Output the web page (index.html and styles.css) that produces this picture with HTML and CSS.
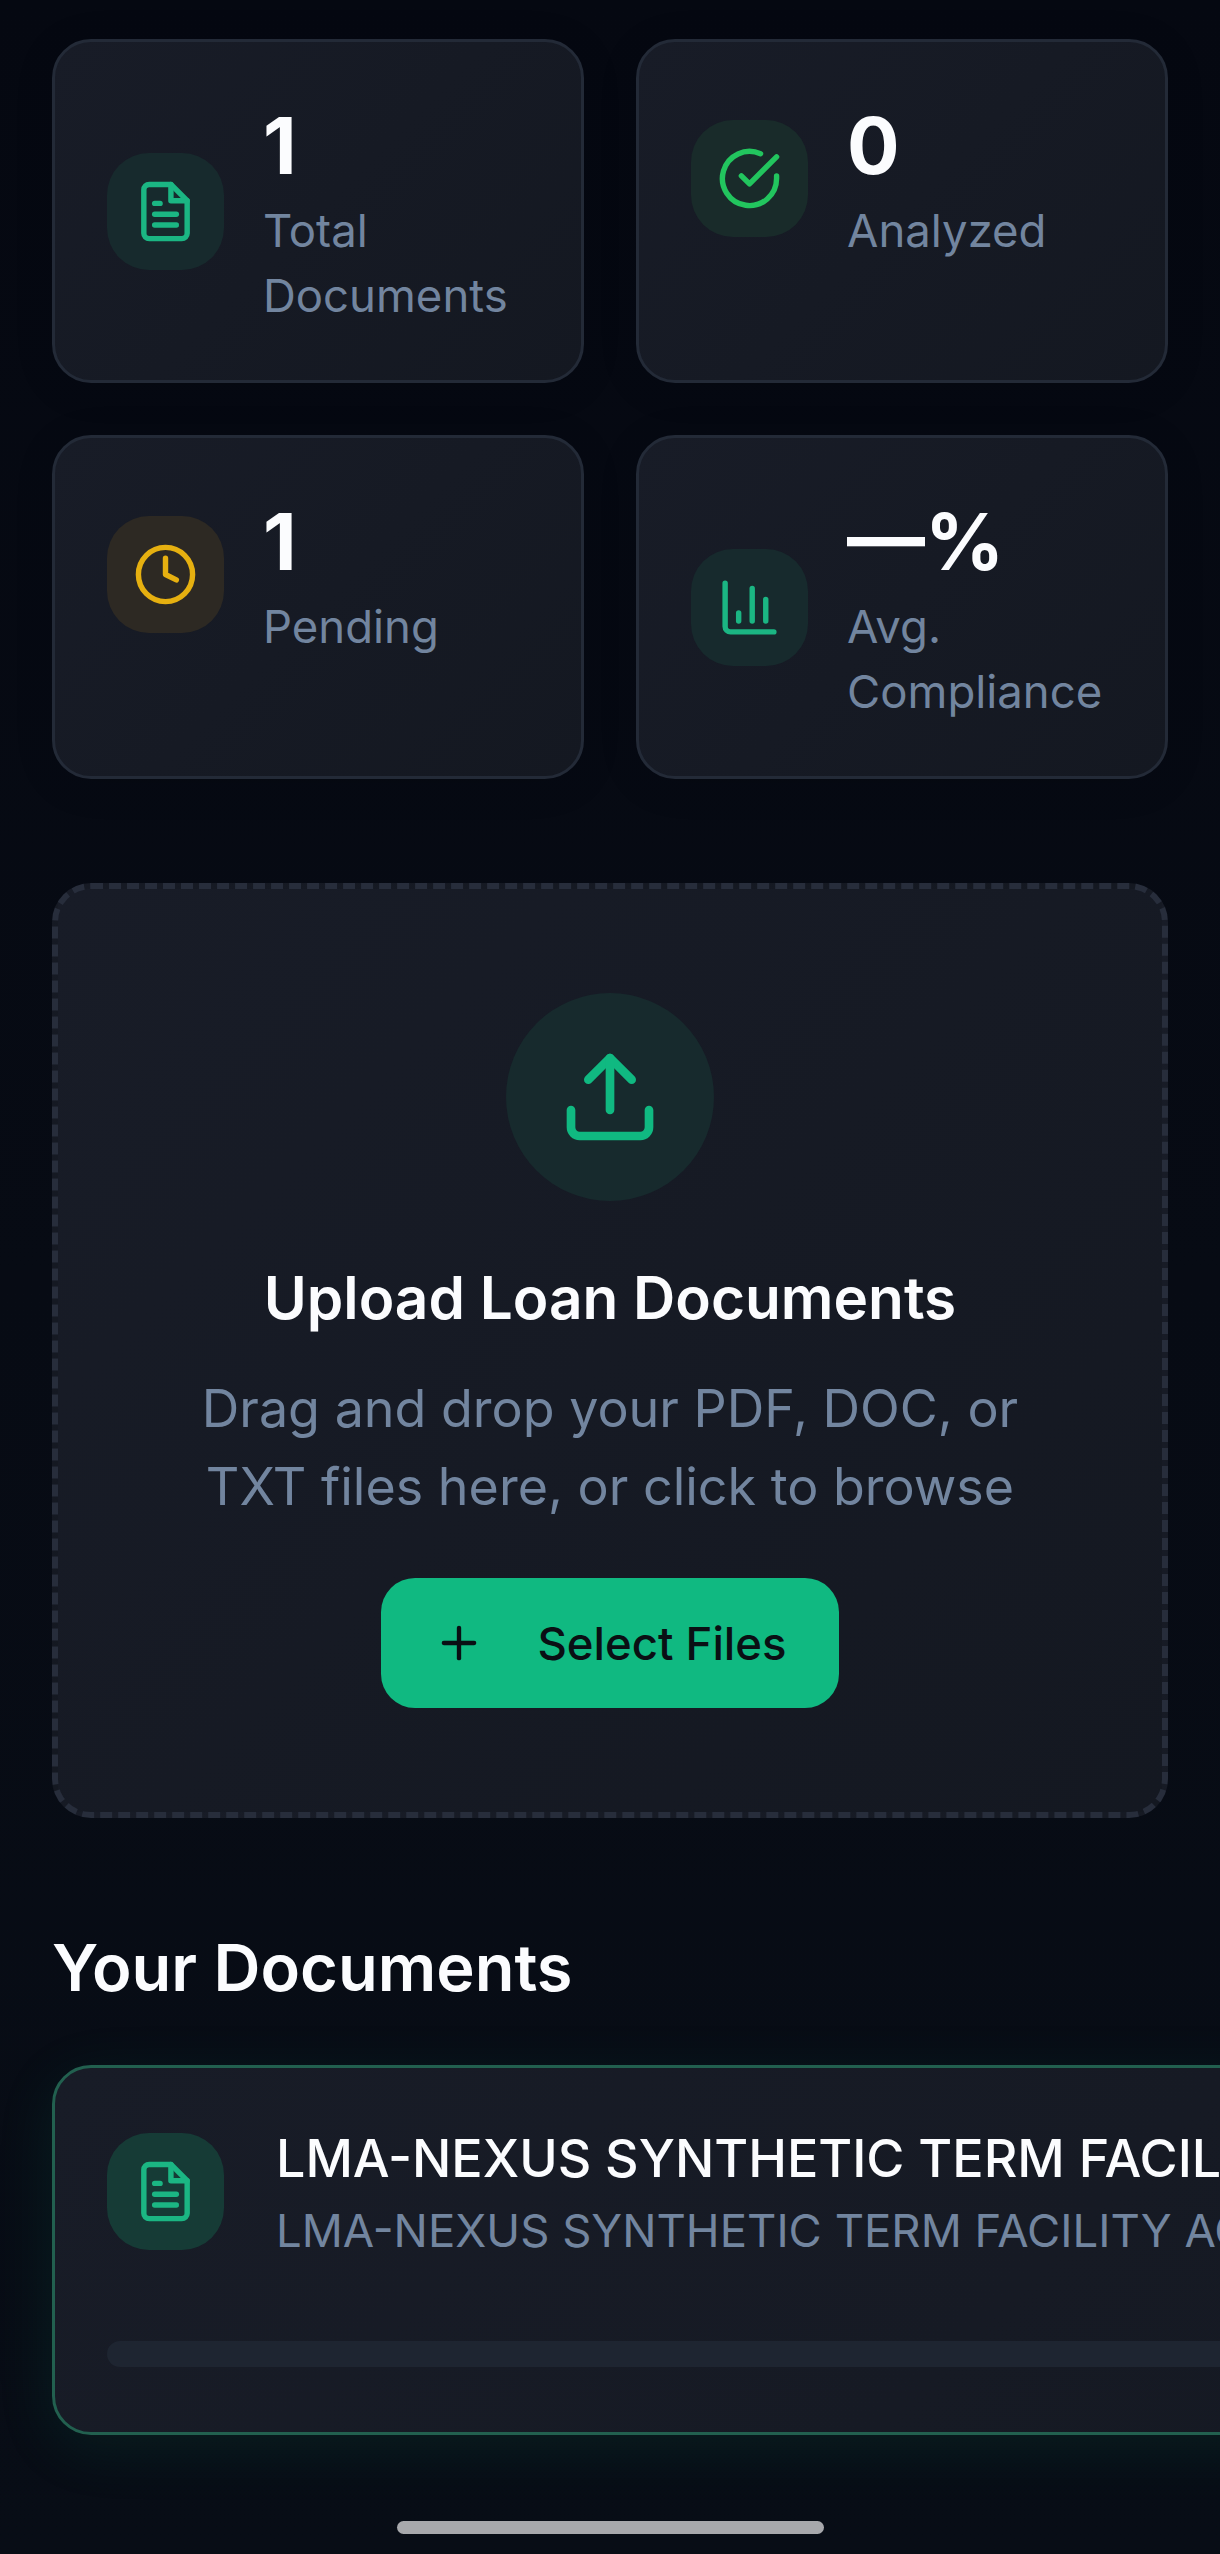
FILE: index.html
```html
<!DOCTYPE html>
<html lang="en">
<head>
<meta charset="utf-8">
<title>Loan Documents</title>
<link rel="stylesheet" href="styles.css">
</head>
<body>
<main class="page">
  <section class="stats">
    <article class="card stat">
      <div class="stat-row">
        <div class="tile tile-mint">
          <svg class="icon" viewBox="0 0 24 24"><path d="M14 2H6a2 2 0 0 0-2 2v16a2 2 0 0 0 2 2h12a2 2 0 0 0 2-2V8z"/><path d="M14 2v6h6"/><path d="M16 13H8"/><path d="M16 17H8"/><path d="M10 9H8"/></svg>
        </div>
        <div class="stat-text">
          <div class="stat-value">1</div>
          <div class="stat-label">Total Documents</div>
        </div>
      </div>
    </article>
    <article class="card stat">
      <div class="stat-row">
        <div class="tile tile-green">
          <svg class="icon" viewBox="0 0 24 24"><path d="M22 11.08V12a10 10 0 1 1-5.93-9.14"/><path d="M22 4 12 14.01l-3-3"/></svg>
        </div>
        <div class="stat-text">
          <div class="stat-value">0</div>
          <div class="stat-label">Analyzed</div>
        </div>
      </div>
    </article>
    <article class="card stat">
      <div class="stat-row">
        <div class="tile tile-amber">
          <svg class="icon" viewBox="0 0 24 24"><circle cx="12" cy="12" r="10"/><path d="M12 6v6l4 2"/></svg>
        </div>
        <div class="stat-text">
          <div class="stat-value">1</div>
          <div class="stat-label">Pending</div>
        </div>
      </div>
    </article>
    <article class="card stat">
      <div class="stat-row">
        <div class="tile tile-mint">
          <svg class="icon" viewBox="0 0 24 24"><path d="M3 3v16a2 2 0 0 0 2 2h16"/><path d="M18 17V9"/><path d="M13 17V5"/><path d="M8 17v-3"/></svg>
        </div>
        <div class="stat-text">
          <div class="stat-value">—%</div>
          <div class="stat-label">Avg. Compliance</div>
        </div>
      </div>
    </article>
  </section>

  <section class="card upload">
    <div class="upload-circle">
      <svg class="upload-icon" viewBox="0 0 24 24"><path d="M21 15v4a2 2 0 0 1-2 2H5a2 2 0 0 1-2-2v-4"/><path d="M17 8l-5-5-5 5"/><path d="M12 3v12"/></svg>
    </div>
    <h2 class="upload-title">Upload Loan Documents</h2>
    <p class="upload-text">Drag and drop your PDF, DOC, or TXT files here, or click to browse</p>
    <button class="upload-btn" type="button">
      <svg class="btn-icon" viewBox="0 0 24 24"><path d="M5 12h14"/><path d="M12 5v14"/></svg>
      <span>Select Files</span>
    </button>
  </section>

  <h2 class="section-title">Your Documents</h2>

  <article class="card doc">
    <div class="doc-row">
      <div class="tile tile-doc">
        <svg class="icon" viewBox="0 0 24 24"><path d="M14 2H6a2 2 0 0 0-2 2v16a2 2 0 0 0 2 2h12a2 2 0 0 0 2-2V8z"/><path d="M14 2v6h6"/><path d="M16 13H8"/><path d="M16 17H8"/><path d="M10 9H8"/></svg>
      </div>
      <div class="doc-text">
        <div class="doc-title">LMA-NEXUS SYNTHETIC TERM FACILITY AGREEMENT</div>
        <div class="doc-sub">LMA-NEXUS SYNTHETIC TERM FACILITY AGREEMENT.pdf</div>
      </div>
    </div>
    <div class="doc-bar"></div>
  </article>

  <div class="home-indicator"></div>
</main>
</body>
</html>
```
FILE: styles.css
```css
* { box-sizing: border-box; }

html, body {
  margin: 0;
  padding: 0;
  height: 100%;
}

body {
  background: linear-gradient(180deg, #050811 0%, #070b14 50%, #080d16 100%);
  font-family: Inter, "Liberation Sans", sans-serif;
  overflow: hidden;
}

.page {
  width: 1220px;
  height: 2554px;
  padding: 39px 52px 0;
  overflow: hidden;
}

.card {
  background: linear-gradient(135deg, #181c27 0%, #141821 100%);
  border: 3px solid #232a37;
  border-radius: 39px;
}

.stats {
  display: grid;
  grid-template-columns: 1fr 1fr;
  gap: 52px;
}

.stat {
  padding: 52px;
  box-shadow: 0 6px 40px rgba(0, 0, 0, 0.1);
}

.stat-row {
  display: flex;
  align-items: center;
  gap: 39px;
}

.tile {
  flex: none;
  width: 117px;
  height: 117px;
  border-radius: 42px;
  display: flex;
  align-items: center;
  justify-content: center;
}

.tile-mint { background: #172a2d; color: #1bb683; }
.tile-green { background: #192b2a; color: #22c55e; }
.tile-amber { background: #2d2923; color: #e6b010; }
.tile-doc { background: #163b36; color: #1bb683; }

.icon {
  width: 65px;
  height: 65px;
  fill: none;
  stroke: currentColor;
  stroke-width: 2;
  stroke-linecap: round;
  stroke-linejoin: round;
}

.stat-value {
  font-size: 78px;
  line-height: 104px;
  font-weight: 700;
  color: #fbfcfe;
}

.stat-label {
  font-size: 45.5px;
  line-height: 65px;
  color: #72859f;
}

.upload {
  margin-top: 104px;
  padding: 104px 52px;
  border: 6.5px dashed #272d3b;
  display: flex;
  flex-direction: column;
  align-items: center;
  text-align: center;
}

.upload-circle {
  width: 208px;
  height: 208px;
  border-radius: 50%;
  background: #172a2d;
  display: flex;
  align-items: center;
  justify-content: center;
}

.upload-icon {
  width: 104px;
  height: 104px;
  fill: none;
  stroke: #10b981;
  stroke-width: 2;
  stroke-linecap: round;
  stroke-linejoin: round;
}

.upload-title {
  margin: 51px 0 27px;
  font-size: 58.5px;
  line-height: 91px;
  font-weight: 600;
  color: #fbfcfe;
}

.upload-text {
  margin: 0;
  max-width: 880px;
  font-size: 52px;
  line-height: 78px;
  color: #72859f;
}

.upload-btn {
  margin-top: 52px;
  height: 130px;
  padding: 0 52px;
  display: flex;
  align-items: center;
  gap: 52px;
  border: 0;
  border-radius: 34px;
  background: #10b981;
  color: #0a0f14;
  font-family: inherit;
  font-size: 45.5px;
  font-weight: 500;
}

.btn-icon {
  width: 52px;
  height: 52px;
  fill: none;
  stroke: currentColor;
  stroke-width: 2;
  stroke-linecap: round;
  stroke-linejoin: round;
}

.section-title {
  margin: 104px 0 52px;
  font-size: 65px;
  line-height: 91px;
  font-weight: 600;
  color: #fbfcfe;
}

.doc {
  width: 2000px;
  height: 370px;
  padding: 52px;
  border-color: #22604f;
  box-shadow: 0 13px 60px rgba(16, 185, 129, 0.1);
}

.doc-row {
  display: flex;
  align-items: center;
  gap: 52px;
}

.doc-text {
  white-space: nowrap;
}

.doc-title {
  font-size: 52px;
  line-height: 78px;
  font-weight: 500;
  color: #fbfcfe;
}

.doc-sub {
  font-size: 45.5px;
  line-height: 65px;
  color: #72859f;
}

.doc-bar {
  margin-top: 78px;
  height: 26px;
  border-radius: 13px;
  background: #1e2531;
}

.home-indicator {
  width: 427px;
  height: 13px;
  margin: 86px auto 0;
  border-radius: 7px;
  background: #a7a8ac;
}
```
